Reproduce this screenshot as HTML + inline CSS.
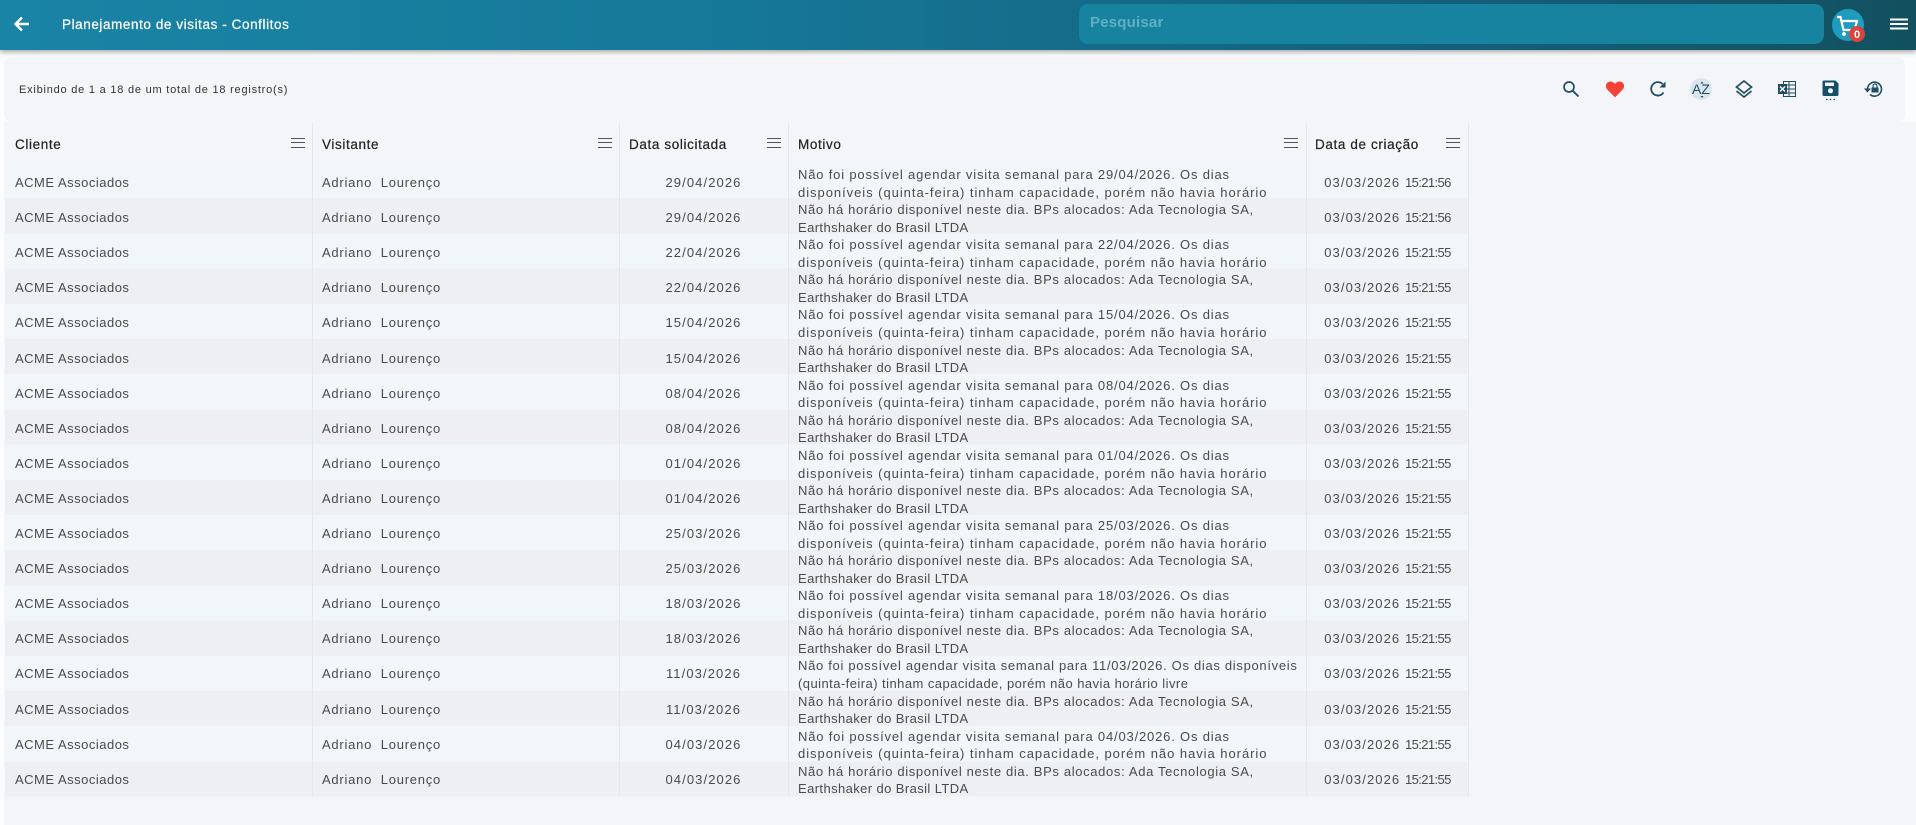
<!DOCTYPE html>
<html lang="pt-BR"><head><meta charset="utf-8"><title>Planejamento de visitas - Conflitos</title>
<style>
*{box-sizing:border-box}
html,body{margin:0;width:1916px;height:825px;overflow:hidden;background:#fbfcfd;font-family:"Liberation Sans",sans-serif}
#top{position:absolute;left:0;top:0;width:1916px;height:50px;background:linear-gradient(90deg,#1a84a6 0%,#167a9a 35%,#14607c 75%,#12505f 100%);box-shadow:0 2px 5px rgba(0,0,0,.35);z-index:5}
#title{position:absolute;left:62px;top:16px;color:#fff;font-size:13.5px;line-height:17px;letter-spacing:.58px;white-space:nowrap;-webkit-text-stroke:.25px #fff}
#search{position:absolute;left:1079px;top:4px;width:745px;height:40px;background:#17839f;border-radius:9px;color:#5fb0c6;font-size:15px;font-weight:bold;line-height:38px;padding-left:11px;letter-spacing:.2px}
#card{position:absolute;left:4px;top:57px;width:1901px;height:65px;background:#f4f5f8;border-radius:8px}
#info{position:absolute;left:19px;top:83px;font-size:11px;line-height:14px;letter-spacing:.78px;color:#333;white-space:nowrap}
#bg{position:absolute;left:4px;top:122px;width:1912px;height:703px;background:#f4f5f8}
#bars{position:absolute;left:5px;top:163.3px;width:1464px;height:633.6px;background:repeating-linear-gradient(180deg,#f1f6fa 0,#f1f6fa 35.2px,#edeff2 35.2px,#edeff2 70.4px)}
.r{position:absolute;left:5px;width:1464px;height:35px;font-size:13px;color:#4a4a4a;white-space:nowrap}
.c{position:absolute;top:0;height:100%;line-height:39.4px}
.c1{left:10px;letter-spacing:.5px}.c2{left:317px;letter-spacing:.75px}.c3{left:614px;width:169px;text-align:center;letter-spacing:1.1px}.c4{left:793px;line-height:17.7px;top:3px;height:auto;letter-spacing:.82px}.c5{left:1301px;width:163px;text-align:center;letter-spacing:1.1px}
.c5 i{font-style:normal;letter-spacing:-.6px}
.p{letter-spacing:.96px}.q{letter-spacing:.65px}.s{letter-spacing:.4px}.t{letter-spacing:.69px}.u{letter-spacing:.45px}
.v{position:absolute;width:1px;top:123px;height:674px;background:#e4e7eb}
.h{position:absolute;top:136px;font-size:13.5px;line-height:17px;color:#222;letter-spacing:.62px;white-space:nowrap;-webkit-text-stroke:.2px #222}
.m{position:absolute;top:138px;width:14px;height:10px;border-top:1.5px solid #555;border-bottom:1.5px solid #555}
.m:after{content:"";position:absolute;left:0;right:0;top:2.75px;height:1.5px;background:#555}
svg{position:absolute}
</style></head><body>
<div id="bg"></div>
<div id="top">
<svg style="left:12px;top:14px" width="20" height="20" viewBox="0 0 20 20"><path d="M17 10H4M10 3.500 3.500 10l6.500 6.500" fill="none" stroke="#fff" stroke-width="2.400"/></svg>
<div id="title">Planejamento de visitas - Conflitos</div>
<div id="search">Pesquisar</div>
<svg style="left:1830px;top:8px" width="38" height="36" viewBox="0 0 38 36"><circle cx="18" cy="17" r="16" fill="#1e9cc0"/><path d="M7 9h3.500l3 13h11l2.500-9H11.500" fill="none" stroke="#fff" stroke-width="2.200"/><circle cx="14" cy="26" r="1.900" fill="#fff"/><circle cx="24" cy="26" r="1.900" fill="#fff"/><circle cx="27" cy="26" r="8" fill="#d9443f"/><text x="27" y="30" fill="#fff" font-size="11" font-weight="bold" text-anchor="middle" font-family="Liberation Sans">0</text></svg>
<svg style="left:1890px;top:17px" width="18" height="14" viewBox="0 0 18 14"><path d="M0 2.500h18M0 7h18M0 11.500h18" stroke="#fff" stroke-width="2"/></svg>
</div>
<div id="card"></div>
<div id="info">Exibindo de 1 a 18 de um total de 18 registro(s)</div>
<svg style="left:1562px;top:80px" width="18" height="18" viewBox="0 0 18 18"><circle cx="7" cy="7" r="5" fill="none" stroke="#1f4e63" stroke-width="1.700"/><path d="M10.800 10.800 16.500 16.500" stroke="#1f4e63" stroke-width="1.900"/></svg>
<svg style="left:1605px;top:79px" width="20" height="20" viewBox="0 0 24 24"><path d="M12 22 2.600 12.400C-.5 9 1.400 3 6.600 3c2.400 0 4.200 1.200 5.400 3 1.200-1.800 3-3 5.400-3 5.200 0 7.100 6 4 9.400z" fill="#f44336"/></svg>
<svg style="left:1649px;top:80px" width="18" height="18" viewBox="0 0 18 18"><path d="M14.500 12.500A6.700 6.700 0 1 1 13.500 4" fill="none" stroke="#1f4e63" stroke-width="1.800"/><path d="M10.500 7.500H16.500V1.500z" fill="#1f4e63"/></svg>
<svg style="left:1690px;top:78px" width="22" height="22" viewBox="0 0 22 22"><circle cx="11" cy="11" r="11" fill="#dbe5ec"/><text x="11" y="16" text-anchor="middle" font-size="14" fill="#1f4e63" font-family="Liberation Sans">AZ</text><path d="M12 3.500l1.500 2h-3zM12 20l1.500-2h-3z" fill="#1f4e63"/></svg>
<svg style="left:1735px;top:79px" width="18" height="20" viewBox="0 0 18 20"><path d="M9 2 16.500 8 9 14 1.500 8z" fill="none" stroke="#1f4e63" stroke-width="1.700"/><path d="M1.500 12 9 18l7.500-6" fill="none" stroke="#1f4e63" stroke-width="1.700"/></svg>
<svg style="left:1778px;top:81px" width="18" height="16" viewBox="0 0 18 16"><path d="M5.500.5h12v15h-12zM5.500 4h12M5.500 8h12M5.500 12h12M11 .5v15" fill="none" stroke="#1f4e63" stroke-width="1"/><rect x="0" y="3" width="9" height="10" fill="#1f4e63"/><path d="M2 5.500l5 5M7 5.500l-5 5" stroke="#fff" stroke-width="1.300"/></svg>
<svg style="left:1822px;top:80px" width="17" height="21" viewBox="0 0 17 21"><path d="M2 .5h11.500l3 3V14.500a1.500 1.500 0 0 1-1.500 1.500H2a1.500 1.500 0 0 1-1.500-1.500V2A1.500 1.500 0 0 1 2 .5z" fill="#14506a"/><rect x="3" y="2.500" width="9" height="3.500" fill="#f3f5f8"/><circle cx="8.500" cy="10.800" r="2.500" fill="#f3f5f8"/><path d="M4 19.500h1.500M7.700 19.500h1.500M11.500 19.500H13" stroke="#14506a" stroke-width="1.300"/></svg>
<svg style="left:1864px;top:80px" width="19" height="18" viewBox="0 0 19 18"><path d="M3.500 9A7 7 0 1 1 6 14.500" fill="none" stroke="#1f4e63" stroke-width="1.600"/><path d="M0 8.500h7L3.500 12.500z" fill="#1f4e63"/><rect x="7.500" y="7.500" width="7" height="5" fill="#1f4e63"/><path d="M9 7.500V6a2 2 0 0 1 4 0v1.500" fill="none" stroke="#1f4e63" stroke-width="1.200"/></svg>

<div class="h" style="left:15px">Cliente</div><div class="m" style="left:291px"></div>
<div class="h" style="left:322px">Visitante</div><div class="m" style="left:598px"></div>
<div class="h" style="left:629px">Data solicitada</div><div class="m" style="left:767px"></div>
<div class="h" style="left:798px">Motivo</div><div class="m" style="left:1284px"></div>
<div class="h" style="left:1315px">Data de criação</div><div class="m" style="left:1446px"></div>

<div id="bars"></div>
<div class="r" style="top:163px"><div class="c c1">ACME Associados</div><div class="c c2">Adriano&nbsp; Lourenço</div><div class="c c3">29/04/2026</div><div class="c c4">Não foi possível agendar visita semanal para 29/04/2026. Os dias<br><span class="p">disponíveis (quinta-feira) tinham capacidade, porém não havia horário</span></div><div class="c c5">03/03/2026 <i>15:21:56</i></div></div>
<div class="r" style="top:198.1px"><div class="c c1">ACME Associados</div><div class="c c2">Adriano&nbsp; Lourenço</div><div class="c c3">29/04/2026</div><div class="c c4"><span class="q">Não há horário disponível neste dia. BPs alocados: Ada Tecnologia SA,</span><br><span class="s">Earthshaker do Brasil LTDA</span></div><div class="c c5">03/03/2026 <i>15:21:56</i></div></div>
<div class="r" style="top:233.2px"><div class="c c1">ACME Associados</div><div class="c c2">Adriano&nbsp; Lourenço</div><div class="c c3">22/04/2026</div><div class="c c4">Não foi possível agendar visita semanal para 22/04/2026. Os dias<br><span class="p">disponíveis (quinta-feira) tinham capacidade, porém não havia horário</span></div><div class="c c5">03/03/2026 <i>15:21:55</i></div></div>
<div class="r" style="top:268.3px"><div class="c c1">ACME Associados</div><div class="c c2">Adriano&nbsp; Lourenço</div><div class="c c3">22/04/2026</div><div class="c c4"><span class="q">Não há horário disponível neste dia. BPs alocados: Ada Tecnologia SA,</span><br><span class="s">Earthshaker do Brasil LTDA</span></div><div class="c c5">03/03/2026 <i>15:21:55</i></div></div>
<div class="r" style="top:303.4px"><div class="c c1">ACME Associados</div><div class="c c2">Adriano&nbsp; Lourenço</div><div class="c c3">15/04/2026</div><div class="c c4">Não foi possível agendar visita semanal para 15/04/2026. Os dias<br><span class="p">disponíveis (quinta-feira) tinham capacidade, porém não havia horário</span></div><div class="c c5">03/03/2026 <i>15:21:55</i></div></div>
<div class="r" style="top:338.5px"><div class="c c1">ACME Associados</div><div class="c c2">Adriano&nbsp; Lourenço</div><div class="c c3">15/04/2026</div><div class="c c4"><span class="q">Não há horário disponível neste dia. BPs alocados: Ada Tecnologia SA,</span><br><span class="s">Earthshaker do Brasil LTDA</span></div><div class="c c5">03/03/2026 <i>15:21:55</i></div></div>
<div class="r" style="top:373.6px"><div class="c c1">ACME Associados</div><div class="c c2">Adriano&nbsp; Lourenço</div><div class="c c3">08/04/2026</div><div class="c c4">Não foi possível agendar visita semanal para 08/04/2026. Os dias<br><span class="p">disponíveis (quinta-feira) tinham capacidade, porém não havia horário</span></div><div class="c c5">03/03/2026 <i>15:21:55</i></div></div>
<div class="r" style="top:408.7px"><div class="c c1">ACME Associados</div><div class="c c2">Adriano&nbsp; Lourenço</div><div class="c c3">08/04/2026</div><div class="c c4"><span class="q">Não há horário disponível neste dia. BPs alocados: Ada Tecnologia SA,</span><br><span class="s">Earthshaker do Brasil LTDA</span></div><div class="c c5">03/03/2026 <i>15:21:55</i></div></div>
<div class="r" style="top:443.8px"><div class="c c1">ACME Associados</div><div class="c c2">Adriano&nbsp; Lourenço</div><div class="c c3">01/04/2026</div><div class="c c4">Não foi possível agendar visita semanal para 01/04/2026. Os dias<br><span class="p">disponíveis (quinta-feira) tinham capacidade, porém não havia horário</span></div><div class="c c5">03/03/2026 <i>15:21:55</i></div></div>
<div class="r" style="top:478.9px"><div class="c c1">ACME Associados</div><div class="c c2">Adriano&nbsp; Lourenço</div><div class="c c3">01/04/2026</div><div class="c c4"><span class="q">Não há horário disponível neste dia. BPs alocados: Ada Tecnologia SA,</span><br><span class="s">Earthshaker do Brasil LTDA</span></div><div class="c c5">03/03/2026 <i>15:21:55</i></div></div>
<div class="r" style="top:514px"><div class="c c1">ACME Associados</div><div class="c c2">Adriano&nbsp; Lourenço</div><div class="c c3">25/03/2026</div><div class="c c4">Não foi possível agendar visita semanal para 25/03/2026. Os dias<br><span class="p">disponíveis (quinta-feira) tinham capacidade, porém não havia horário</span></div><div class="c c5">03/03/2026 <i>15:21:55</i></div></div>
<div class="r" style="top:549.1px"><div class="c c1">ACME Associados</div><div class="c c2">Adriano&nbsp; Lourenço</div><div class="c c3">25/03/2026</div><div class="c c4"><span class="q">Não há horário disponível neste dia. BPs alocados: Ada Tecnologia SA,</span><br><span class="s">Earthshaker do Brasil LTDA</span></div><div class="c c5">03/03/2026 <i>15:21:55</i></div></div>
<div class="r" style="top:584.2px"><div class="c c1">ACME Associados</div><div class="c c2">Adriano&nbsp; Lourenço</div><div class="c c3">18/03/2026</div><div class="c c4">Não foi possível agendar visita semanal para 18/03/2026. Os dias<br><span class="p">disponíveis (quinta-feira) tinham capacidade, porém não havia horário</span></div><div class="c c5">03/03/2026 <i>15:21:55</i></div></div>
<div class="r" style="top:619.3px"><div class="c c1">ACME Associados</div><div class="c c2">Adriano&nbsp; Lourenço</div><div class="c c3">18/03/2026</div><div class="c c4"><span class="q">Não há horário disponível neste dia. BPs alocados: Ada Tecnologia SA,</span><br><span class="s">Earthshaker do Brasil LTDA</span></div><div class="c c5">03/03/2026 <i>15:21:55</i></div></div>
<div class="r" style="top:654.4px"><div class="c c1">ACME Associados</div><div class="c c2">Adriano&nbsp; Lourenço</div><div class="c c3">11/03/2026</div><div class="c c4"><span class="t">Não foi possível agendar visita semanal para 11/03/2026. Os dias disponíveis</span><br><span class="u">(quinta-feira) tinham capacidade, porém não havia horário livre</span></div><div class="c c5">03/03/2026 <i>15:21:55</i></div></div>
<div class="r" style="top:689.5px"><div class="c c1">ACME Associados</div><div class="c c2">Adriano&nbsp; Lourenço</div><div class="c c3">11/03/2026</div><div class="c c4"><span class="q">Não há horário disponível neste dia. BPs alocados: Ada Tecnologia SA,</span><br><span class="s">Earthshaker do Brasil LTDA</span></div><div class="c c5">03/03/2026 <i>15:21:55</i></div></div>
<div class="r" style="top:724.6px"><div class="c c1">ACME Associados</div><div class="c c2">Adriano&nbsp; Lourenço</div><div class="c c3">04/03/2026</div><div class="c c4">Não foi possível agendar visita semanal para 04/03/2026. Os dias<br><span class="p">disponíveis (quinta-feira) tinham capacidade, porém não havia horário</span></div><div class="c c5">03/03/2026 <i>15:21:55</i></div></div>
<div class="r" style="top:759.7px"><div class="c c1">ACME Associados</div><div class="c c2">Adriano&nbsp; Lourenço</div><div class="c c3">04/03/2026</div><div class="c c4"><span class="q">Não há horário disponível neste dia. BPs alocados: Ada Tecnologia SA,</span><br><span class="s">Earthshaker do Brasil LTDA</span></div><div class="c c5">03/03/2026 <i>15:21:55</i></div></div>
<div class="v" style="left:312px"></div><div class="v" style="left:619px"></div><div class="v" style="left:788px"></div><div class="v" style="left:1306px"></div><div class="v" style="left:1468px"></div>
</body></html>
